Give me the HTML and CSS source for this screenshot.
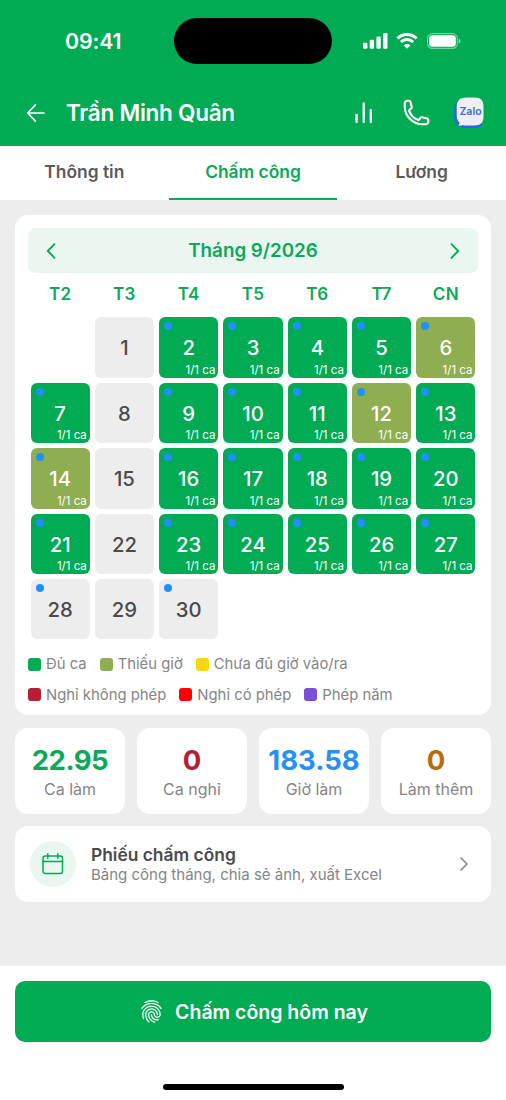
FILE: index.html
```html
<!DOCTYPE html>
<html lang="vi">
<head>
<meta charset="utf-8">
<title>Chấm công</title>
<meta name="viewport" content="width=device-width, initial-scale=1">
<link rel="stylesheet" href="styles.css">
</head>
<body>
<div class="screen">
  <header class="top">
    <div class="status">
      <span class="clock">09:41</span>
      <span class="island"></span>
      <span class="indicators">
        <svg width="25" height="16" viewBox="0 0 25 16" fill="#fff"><rect x="0" y="9.8" width="4.4" height="6" rx="1.3"/><rect x="6.7" y="6.8" width="4.4" height="9" rx="1.3"/><rect x="13.4" y="3.6" width="4.4" height="12.2" rx="1.3"/><rect x="20.1" y="0" width="4.4" height="15.8" rx="1.3"/></svg>
        <svg class="wifi" width="22" height="16" viewBox="0 0 22 16" fill="none" stroke="#fff" stroke-width="2.9"><path d="M1.4 5.4a13.7 13.7 0 0 1 19.2 0"/><path d="M4.9 9a8.7 8.7 0 0 1 12.2 0"/><path d="M11 15.8 7.6 12.3a4.9 4.9 0 0 1 6.8 0z" fill="#fff" stroke="none"/></svg>
        <svg class="battery" width="34" height="16" viewBox="0 0 34 16"><rect x=".6" y=".6" width="29.8" height="14.8" rx="4.8" fill="none" stroke="#fff" stroke-opacity=".45" stroke-width="1.1"/><rect x="2.2" y="2.2" width="26.6" height="11.6" rx="3.3" fill="#fff"/><path d="M31.8 5.4c2.2.8 2.2 4.4 0 5.200z" fill="#fff" fill-opacity=".55"/></svg>
      </span>
    </div>
    <div class="appbar">
      <svg class="back" width="20" height="20" viewBox="0 0 20 20" fill="none" stroke="#fff" stroke-width="1.7" stroke-linecap="round" stroke-linejoin="round"><path d="M18 10H2M9.400 1.900 1.700 10l7.700 8.100"/></svg>
      <h1 class="name">Trần Minh Quân</h1>
      <svg class="bars" width="18" height="22" viewBox="0 0 18 22" stroke="#fff" stroke-width="2.300" stroke-linecap="round"><path d="M1.600 12.800v7.200M8.700 1.500V20M15.800 8.200V20"/></svg>
      <svg class="phone" width="29" height="29" viewBox="0 0 24 24" fill="none" stroke="#fff" stroke-width="1.750" stroke-linecap="round" stroke-linejoin="round"><path d="M2.250 6.750c0 8.284 6.716 15 15 15h2.250a2.250 2.250 0 0 0 2.250-2.250v-1.372c0-.516-.351-.966-.852-1.091l-4.423-1.106c-.440-.110-.902.055-1.173.417l-.970 1.293c-.282.376-.769.542-1.210.380a12.035 12.035 0 0 1-7.143-7.143c-.162-.441.004-.928.380-1.210l1.293-.970c.363-.271.527-.734.417-1.173L6.963 3.102a1.125 1.125 0 0 0-1.091-.852H4.500A2.250 2.250 0 0 0 2.250 4.500v2.250Z"/></svg>
      <div class="zalo">
        <svg width="32" height="32" viewBox="0 0 32 32"><path d="M12 2C4 2 1.300 6 1.300 13v6c0 8 3.500 12 11.700 12h7c4.500 0 7.500-1 9-3.500z" fill="#2862f0"/><path d="M13.500.500h8c6.500 0 9 3.200 9 9v10.300c0 5.800-2.800 8.700-9 8.700h-8c-1.500 0-2.800-.200-3.900-.600-1.200.700-2.800 1-4.400.9.900-.9 1.300-2.100 1-3.300C4.700 23.500 3.700 21.500 3.700 19V9.500c0-6 3.300-9 9.800-9z" fill="#eeeff3"/></svg>
        <span>Zalo</span>
      </div>
    </div>
  </header>

  <nav class="tabs">
    <a class="tab">Thông tin</a>
    <a class="tab active">Chấm công</a>
    <a class="tab">Lương</a>
  </nav>

  <main class="content">
    <section class="card calendar">
      <div class="month">
        <svg width="10" height="16" viewBox="0 0 10 16"><path d="M8.500 1.200 1.800 8l6.700 6.800"/></svg>
        <span>Tháng 9/2026</span>
        <svg width="10" height="16" viewBox="0 0 10 16"><path d="M1.500 1.200 8.200 8l-6.700 6.800"/></svg>
      </div>
      <div class="week"><span>T2</span><span>T3</span><span>T4</span><span>T5</span><span>T6</span><span>T7</span><span>CN</span></div>
      <div class="days">
        <div class="blank"></div>
        <div class="day">1</div>
        <div class="day full">2<i></i><small>1/1 ca</small></div>
        <div class="day full">3<i></i><small>1/1 ca</small></div>
        <div class="day full">4<i></i><small>1/1 ca</small></div>
        <div class="day full">5<i></i><small>1/1 ca</small></div>
        <div class="day short">6<i></i><small>1/1 ca</small></div>
        <div class="day full">7<i></i><small>1/1 ca</small></div>
        <div class="day">8</div>
        <div class="day full">9<i></i><small>1/1 ca</small></div>
        <div class="day full">10<i></i><small>1/1 ca</small></div>
        <div class="day full">11<i></i><small>1/1 ca</small></div>
        <div class="day short">12<i></i><small>1/1 ca</small></div>
        <div class="day full">13<i></i><small>1/1 ca</small></div>
        <div class="day short">14<i></i><small>1/1 ca</small></div>
        <div class="day">15</div>
        <div class="day full">16<i></i><small>1/1 ca</small></div>
        <div class="day full">17<i></i><small>1/1 ca</small></div>
        <div class="day full">18<i></i><small>1/1 ca</small></div>
        <div class="day full">19<i></i><small>1/1 ca</small></div>
        <div class="day full">20<i></i><small>1/1 ca</small></div>
        <div class="day full">21<i></i><small>1/1 ca</small></div>
        <div class="day">22</div>
        <div class="day full">23<i></i><small>1/1 ca</small></div>
        <div class="day full">24<i></i><small>1/1 ca</small></div>
        <div class="day full">25<i></i><small>1/1 ca</small></div>
        <div class="day full">26<i></i><small>1/1 ca</small></div>
        <div class="day full">27<i></i><small>1/1 ca</small></div>
        <div class="day">28<i></i></div>
        <div class="day">29</div>
        <div class="day">30<i></i></div>
      </div>
      <div class="legend">
        <div class="legend-row">
          <span class="key k-full">Đủ ca</span>
          <span class="key k-short">Thiếu giờ</span>
          <span class="key k-missing">Chưa đủ giờ vào/ra</span>
        </div>
        <div class="legend-row">
          <span class="key k-absent">Nghỉ không phép</span>
          <span class="key k-leave">Nghỉ có phép</span>
          <span class="key k-annual">Phép năm</span>
        </div>
      </div>
    </section>

    <section class="stats">
      <div class="card stat"><b class="green">22.95</b><span>Ca làm</span></div>
      <div class="card stat"><b class="crimson">0</b><span>Ca nghỉ</span></div>
      <div class="card stat"><b class="blue">183.58</b><span>Giờ làm</span></div>
      <div class="card stat"><b class="amber">0</b><span>Làm thêm</span></div>
    </section>

    <a class="card sheet">
      <span class="sheet-icon">
        <svg width="22" height="22" viewBox="0 0 22 22" fill="none" stroke="#07a957" stroke-width="1.500" stroke-linecap="round"><rect x="1" y="3" width="19.500" height="17.500" rx="2.300"/><path d="M1 8.600h19.500M5.800.800v4.400M15.800.800v4.400"/></svg>
      </span>
      <span class="sheet-text"><strong>Phiếu chấm công</strong><span>Bảng công tháng, chia sẻ ảnh, xuất Excel</span></span>
      <svg class="chevron" width="8" height="14" viewBox="0 0 8 14" fill="none" stroke="#858585" stroke-width="1.600" stroke-linecap="round" stroke-linejoin="round"><path d="m1 1 6 6-6 6"/></svg>
    </a>
  </main>

  <footer class="bottom">
    <button class="punch">
      <svg width="27" height="27" viewBox="0 0 24 24" fill="#fff" stroke="#fff" stroke-width=".15"><path d="M17.810 4.470c-.080 0-.160-.020-.230-.060C15.660 3.420 14 3 12.010 3c-1.980 0-3.860.470-5.570 1.410-.240.130-.540.040-.680-.200-.130-.240-.040-.550.200-.680C7.820 2.520 9.860 2 12.010 2c2.130 0 3.990.470 6.030 1.520.250.130.340.430.210.670-.090.180-.260.280-.440.280zM3.500 9.720c-.100 0-.200-.030-.290-.090-.230-.160-.280-.470-.120-.700.990-1.400 2.250-2.500 3.750-3.270C9.980 4.040 14 4.030 17.150 5.650c1.500.770 2.760 1.860 3.750 3.250.160.220.110.540-.120.700-.230.160-.540.110-.700-.120-.900-1.260-2.040-2.250-3.390-2.940-2.870-1.470-6.540-1.470-9.400.010-1.360.700-2.500 1.700-3.400 2.960-.080.140-.230.210-.390.210zm6.250 12.070c-.130 0-.260-.050-.350-.150-.870-.870-1.340-1.430-2.010-2.640-.690-1.230-1.050-2.730-1.050-4.340 0-2.970 2.540-5.390 5.660-5.390s5.660 2.420 5.660 5.390c0 .280-.220.500-.500.500s-.500-.220-.500-.500c0-2.420-2.090-4.390-4.660-4.390s-4.660 1.970-4.660 4.390c0 1.440.320 2.770.930 3.850.640 1.150 1.080 1.640 1.850 2.420.190.200.190.510 0 .710-.110.100-.240.150-.370.150zm7.170-1.850c-1.190 0-2.240-.300-3.100-.890-1.490-1.010-2.380-2.650-2.380-4.390 0-.280.220-.500.500-.500s.500.220.500.500c0 1.410.720 2.740 1.940 3.560.710.480 1.540.710 2.540.710.240 0 .640-.030 1.040-.100.270-.050.530.130.580.410.050.270-.130.530-.410.580-.570.110-1.070.120-1.210.120zM14.910 22c-.040 0-.090-.010-.130-.020-1.590-.440-2.630-1.030-3.720-2.100-1.400-1.390-2.170-3.240-2.170-5.220 0-1.620 1.380-2.940 3.080-2.940s3.080 1.320 3.080 2.940c0 1.070.930 1.940 2.080 1.940s2.080-.870 2.080-1.940c0-3.770-3.250-6.830-7.250-6.830-2.840 0-5.440 1.580-6.610 4.030-.390.810-.590 1.760-.590 2.800 0 .780.070 2.010.670 3.610.100.260-.030.550-.290.640-.260.100-.550-.040-.640-.290-.490-1.310-.730-2.610-.730-3.960 0-1.200.230-2.290.680-3.240 1.330-2.790 4.280-4.600 7.510-4.600 4.550 0 8.250 3.510 8.250 7.830 0 1.620-1.380 2.940-3.080 2.940s-3.080-1.320-3.080-2.940c0-1.070-.930-1.940-2.080-1.940s-2.080.870-2.080 1.940c0 1.710.660 3.310 1.870 4.510.950.940 1.860 1.460 3.270 1.850.270.070.420.350.350.610-.050.230-.260.380-.470.380z"/></svg>
      <span>Chấm công hôm nay</span>
    </button>
    <div class="home"></div>
  </footer>
</div>
</body>
</html>
```
FILE: styles.css
```css
* { box-sizing: border-box; }
body { margin: 0; font-family: Inter, "Liberation Sans", sans-serif; color: #4b4b4b; background: #fff; }
svg { display: block; flex: none; }
.screen { width: 506px; height: 1100px; display: flex; flex-direction: column; overflow: hidden; }

.top { height: 146px; flex: none; background: #00ab54; color: #fff; }
.status { height: 79px; padding-top: 18px; display: grid; grid-template-columns: 174px 158px 1fr; }
.clock { margin-top: 9px; padding-left: 65px; font-size: 21.3px; line-height: 29px; font-weight: 600; letter-spacing: -0.1px; }
.island { height: 46px; border-radius: 23px; background: #000; }
.indicators { display: flex; align-items: center; height: 46px; padding-left: 31px; }
.wifi { margin-left: 8px; }
.battery { margin-left: 9px; }
.appbar { height: 67px; display: flex; align-items: center; padding-left: 26px; }
.name { margin: 0 auto 0 20px; font-size: 22.5px; line-height: 30px; font-weight: 600; letter-spacing: -0.25px; white-space: nowrap; }
.phone { margin-left: 29px; }
.zalo { position: relative; width: 32px; height: 32px; margin: 0 21px 0 22px; }
.zalo span { position: absolute; left: 6.5px; top: 9px; font: 600 10.5px/12px Inter, sans-serif; color: #3b6be0; }

.tabs { height: 54px; flex: none; display: grid; grid-template-columns: repeat(3, 1fr); background: #fff; }
.tab { text-align: center; font-size: 17.4px; line-height: 52px; font-weight: 600; color: #5a5a5a; border-bottom: 2.5px solid transparent; }
.tab.active { color: #0ca85a; border-color: #0ca85a; }

.content { flex: 1; background: #ededed; padding: 15px 15px 0; }
.card { background: #fff; border-radius: 13px; }
.calendar { height: 500px; padding: 13px; }
.month { height: 45px; border-radius: 8px; background: #e9f7f0; display: flex; align-items: center; justify-content: space-between; padding: 0 18px; color: #0ca85a; font-size: 18.8px; font-weight: 600; }
.month svg { fill: none; stroke: #0ca85a; stroke-width: 1.9; stroke-linecap: round; stroke-linejoin: round; }
.week { height: 44.4px; display: grid; grid-template-columns: repeat(7, 1fr); text-align: center; line-height: 43px; font-size: 17px; font-weight: 600; letter-spacing: .3px; color: #0ca85a; }
.days { display: grid; grid-template-columns: repeat(7, 1fr); grid-auto-rows: 60.4px; gap: 5px; padding: 0 2.5px; }
.day { position: relative; border-radius: 6px; background: #ededed; text-align: center; font-size: 20.3px; line-height: 61.400px; font-weight: 450; }
.day.full { background: #00ab54; color: #fff; }
.day.short { background: #8fad51; color: #fff; }
.day i { position: absolute; left: 5px; top: 5px; width: 8px; height: 8px; border-radius: 50%; background: #1e90ff; }
.day small { position: absolute; right: 3px; bottom: 1px; font-size: 11.5px; line-height: 14px; font-weight: 400; white-space: nowrap; }
.legend { margin-top: 9.6px; }
.legend-row { display: flex; gap: 13px; height: 30.5px; align-items: center; }
.key { display: flex; align-items: center; gap: 5px; font-size: 14.85px; line-height: 20px; color: #858585; white-space: nowrap; }
.key::before { content: ""; width: 13px; height: 13px; border-radius: 3px; background: var(--c); }
.k-full { --c: #00ab54; }
.k-short { --c: #8fad51; }
.k-missing { --c: #f5d90a; }
.k-absent { --c: #b32035; }
.k-leave { --c: #fd0202; }
.k-annual { --c: #7c4fd6; }

.stats { display: grid; grid-template-columns: repeat(4, 1fr); gap: 12px; margin-top: 13px; }
.stat { height: 86px; padding-top: 15px; display: flex; flex-direction: column; align-items: center; white-space: nowrap; }
.stat b { font-size: 27.5px; line-height: 34px; font-weight: 700; }
.stat .green { letter-spacing: -0.5px; }
.stat span { font-size: 16px; line-height: 24px; color: #858585; }
.green { color: #0ca85a; }
.crimson { color: #b32035; }
.blue { color: #2690f5; }
.amber { color: #b46f0c; }

.sheet { margin-top: 12px; height: 76px; display: flex; align-items: center; padding: 0 23px 0 15px; }
.sheet-icon { width: 46px; height: 46px; border-radius: 50%; background: #e9f7f0; display: grid; place-items: center; }
.sheet-text { margin-left: 15px; display: flex; flex-direction: column; white-space: nowrap; }
.sheet-text strong { font-size: 17.4px; line-height: 21px; font-weight: 600; }
.sheet-text span { font-size: 15px; line-height: 20px; color: #858585; }
.chevron { margin-left: auto; }

.bottom { height: 134px; flex: none; padding: 15px 15px 0; display: flex; flex-direction: column; align-items: center; background: #fff; }
.punch { width: 100%; height: 61px; flex: none; padding: 0; border: 0; border-radius: 10px; background: #00ab54; color: #fff; display: flex; align-items: center; justify-content: center; gap: 10px; font: 600 19.5px/28px Inter, sans-serif; white-space: nowrap; }
.home { margin-top: 42px; width: 181px; height: 6px; border-radius: 3px; background: #000; }
```
